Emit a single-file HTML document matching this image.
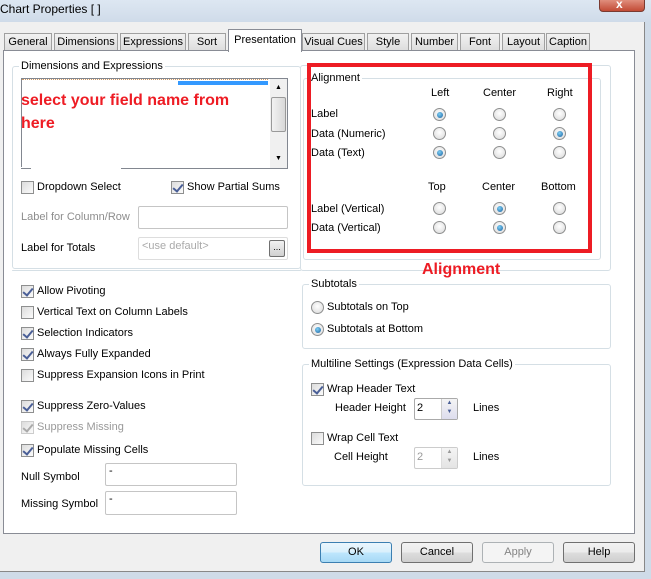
<!DOCTYPE html>
<html><head><style>
*{margin:0;padding:0;box-sizing:border-box}
body{width:651px;height:579px;overflow:hidden;background:#cfdbe8;font-family:"Liberation Sans",sans-serif;font-size:11px;color:#000;position:relative}
.a{position:absolute}
.t{position:absolute;white-space:nowrap;font-size:11px}
.tab{position:absolute;top:33px;height:18px;border:1px solid #a0a0a0;border-bottom:none;background:linear-gradient(#f2f2f2,#dcdcdc);font-size:11px;text-align:center;line-height:16px}
.grp{position:absolute;border:1px solid #d5dfe5;border-radius:3px}
.lg{position:absolute;background:#fff;padding:0 2px;font-size:11px;white-space:nowrap}
.cb{position:absolute;width:13px;height:13px;border:1px solid #8e8f8f;background:linear-gradient(135deg,#dcdcdc,#fbfbfb)}
.cb.c::after{content:"";position:absolute;left:3px;top:0px;width:4px;height:8px;border:solid #4a5f97;border-width:0 2px 2px 0;transform:rotate(40deg)}
.cb.g::after{border-color:#aaa}
.rd{position:absolute;width:13px;height:13px;border-radius:50%;border:1px solid #8e8f8f;background:radial-gradient(circle at 50% 40%,#fff,#d8d8d8)}
.rd.s::after{content:"";position:absolute;left:2.5px;top:2.5px;width:6px;height:6px;border-radius:50%;background:radial-gradient(circle at 40% 35%,#7ed0f5,#1a5f9e)}
.inp{position:absolute;background:#fff;border:1px solid #c5c5c5;border-radius:2px}
.btn{position:absolute;top:542px;width:72px;height:21px;border:1px solid #707070;border-radius:3px;background:linear-gradient(#f2f2f2 0,#ebebeb 50%,#dddddd 51%,#cfcfcf);text-align:center;line-height:19px;font-size:11px}
</style></head><body>
<!-- title -->
<div class="a" style="left:0;top:0;width:651px;height:22px;background:linear-gradient(#dde7f2,#cfdbe9)"></div>
<div class="t" style="left:0;top:2px;font-size:12px">Chart Properties [ ]</div>
<div class="a" style="left:599px;top:-4px;width:46px;height:16px;border:1px solid #7a3a30;border-radius:0 0 4px 4px;background:linear-gradient(#e8a090,#c24b35)"></div>
<div class="t" style="left:616px;top:-3px;color:#fff;font-weight:bold;font-size:12px">x</div>
<!-- dialog body -->
<div class="a" style="left:0;top:22px;width:645px;height:550px;background:#f0f0f0;border-right:1px solid #888;border-bottom:1px solid #888"></div>
<!-- tabs -->
<div class="tab" style="left:4px;width:48px">General</div>
<div class="tab" style="left:54px;width:64px">Dimensions</div>
<div class="tab" style="left:120px;width:66px">Expressions</div>
<div class="tab" style="left:188px;width:38px">Sort</div>
<div class="tab" style="left:302px;width:63px">Visual Cues</div>
<div class="tab" style="left:367px;width:42px">Style</div>
<div class="tab" style="left:411px;width:47px">Number</div>
<div class="tab" style="left:460px;width:40px">Font</div>
<div class="tab" style="left:502px;width:43px">Layout</div>
<div class="tab" style="left:546px;width:44px">Caption</div>
<!-- panel -->
<div class="a" style="left:3px;top:50px;width:632px;height:484px;background:#fff;border:1px solid #898c95"></div>
<div class="a" style="left:228px;top:29px;width:74px;height:23px;background:#fff;border:1px solid #898c95;border-bottom:none;text-align:center;line-height:20px">Presentation</div>
<!-- dims group -->
<div class="grp" style="left:12px;top:66px;width:289px;height:203px"></div>
<div class="lg" style="left:19px;top:60px">Dimensions and Expressions</div>
<div class="a" style="left:21px;top:78px;width:267px;height:91px;border:1px solid #828790;background:#fff"></div>
<div class="a" style="left:22px;top:79px;width:246px;height:2px;border-top:1px dotted #c96"></div>
<div class="a" style="left:178px;top:81px;width:90px;height:4px;background:#3399ff"></div>
<div class="t" style="left:21px;top:89px;color:#ee1c24;font-weight:bold;font-size:16px;line-height:23px">select your field name from<br>here</div>
<div class="a" style="left:270px;top:79px;width:17px;height:89px;background:#f0f0f0"></div>
<div class="a" style="left:271px;top:97px;width:15px;height:35px;border:1px solid #999;border-radius:2px;background:linear-gradient(90deg,#f2f2f2,#d8d8d8)"></div>
<div class="t" style="left:275px;top:84px;font-size:7px">▲</div><div class="t" style="left:275px;top:155px;font-size:7px">▼</div>
<div class="a" style="left:21px;top:167px;width:100px;height:4px;background:#fff"></div><div class="a" style="left:21px;top:168px;width:10px;height:1px;background:#828790"></div>
<div class="cb" style="left:21px;top:181px"></div><div class="t" style="left:37px;top:181px">Dropdown Select</div>
<div class="cb c" style="left:171px;top:181px"></div><div class="t" style="left:187px;top:181px">Show Partial Sums</div>
<div class="t" style="left:21px;top:211px;color:#8d8d8d">Label for Column/Row</div>
<div class="inp" style="left:138px;top:206px;width:150px;height:23px"></div>
<div class="t" style="left:21px;top:242px">Label for Totals</div>
<div class="inp" style="left:138px;top:237px;width:150px;height:23px;border-color:#ddd"></div>
<div class="t" style="left:142px;top:240px;color:#aaa">&lt;use default&gt;</div>
<div class="a" style="left:269px;top:240px;width:16px;height:17px;border:1px solid #707070;border-radius:2px;background:linear-gradient(#f2f2f2,#d0d0d0);font-size:9px;text-align:center;line-height:12px">...</div>
<!-- alignment -->
<div class="grp" style="left:300px;top:65px;width:311px;height:206px"></div>
<div class="grp" style="left:303px;top:78px;width:298px;height:182px"></div>
<div class="lg" style="left:309px;top:72px">Alignment</div>
<div class="a" style="left:307px;top:63px;width:285px;height:190px;border:4px solid #ed1c24"></div>
<div class="t" style="left:431px;top:87px">Left</div><div class="t" style="left:483px;top:87px">Center</div><div class="t" style="left:547px;top:87px">Right</div>
<div class="t" style="left:311px;top:108px">Label</div><div class="t" style="left:311px;top:128px">Data (Numeric)</div><div class="t" style="left:311px;top:147px">Data (Text)</div>
<div class="t" style="left:428px;top:181px">Top</div><div class="t" style="left:482px;top:181px">Center</div><div class="t" style="left:541px;top:181px">Bottom</div>
<div class="t" style="left:311px;top:203px">Label (Vertical)</div><div class="t" style="left:311px;top:222px">Data (Vertical)</div>
<div class="rd s" style="left:433px;top:108px"></div><div class="rd" style="left:493px;top:108px"></div><div class="rd" style="left:553px;top:108px"></div>
<div class="rd" style="left:433px;top:127px"></div><div class="rd" style="left:493px;top:127px"></div><div class="rd s" style="left:553px;top:127px"></div>
<div class="rd s" style="left:433px;top:146px"></div><div class="rd" style="left:493px;top:146px"></div><div class="rd" style="left:553px;top:146px"></div>
<div class="rd" style="left:433px;top:202px"></div><div class="rd s" style="left:493px;top:202px"></div><div class="rd" style="left:553px;top:202px"></div>
<div class="rd" style="left:433px;top:221px"></div><div class="rd s" style="left:493px;top:221px"></div><div class="rd" style="left:553px;top:221px"></div>
<div class="t" style="left:422px;top:261px;color:#ed1c24;font-weight:bold;font-size:16px">Alignment</div>
<!-- subtotals -->
<div class="grp" style="left:302px;top:284px;width:309px;height:65px"></div>
<div class="lg" style="left:309px;top:278px">Subtotals</div>
<div class="rd" style="left:311px;top:301px"></div><div class="t" style="left:327px;top:301px">Subtotals on Top</div>
<div class="rd s" style="left:311px;top:323px"></div><div class="t" style="left:327px;top:323px">Subtotals at Bottom</div>
<!-- multiline -->
<div class="grp" style="left:302px;top:364px;width:309px;height:122px"></div>
<div class="lg" style="left:309px;top:358px">Multiline Settings (Expression Data Cells)</div>
<div class="cb c" style="left:311px;top:383px"></div><div class="t" style="left:327px;top:383px">Wrap Header Text</div>
<div class="t" style="left:335px;top:402px">Header Height</div>
<div class="inp" style="left:414px;top:398px;width:44px;height:22px;border-color:#aaa"></div><div class="t" style="left:417px;top:402px">2</div>
<div class="a" style="left:441px;top:399px;width:16px;height:20px;background:linear-gradient(#f4f4f4,#dde);border-left:1px solid #ccc;font-size:6px;color:#4a5f97;text-align:center;line-height:9px">▲<br>▼</div>
<div class="t" style="left:473px;top:402px">Lines</div>
<div class="cb" style="left:311px;top:432px"></div><div class="t" style="left:327px;top:432px">Wrap Cell Text</div>
<div class="t" style="left:334px;top:451px">Cell Height</div>
<div class="inp" style="left:414px;top:447px;width:44px;height:22px;border-color:#ccc"></div><div class="t" style="left:417px;top:451px;color:#999">2</div>
<div class="a" style="left:441px;top:448px;width:16px;height:20px;background:linear-gradient(#f4f4f4,#e4e4e4);border-left:1px solid #ddd;font-size:6px;color:#999;text-align:center;line-height:9px">▲<br>▼</div>
<div class="t" style="left:473px;top:451px">Lines</div>
<!-- left checkboxes -->
<div class="grp" style="left:12px;top:270px;width:289px;height:0;border-width:1px 0 0 0"></div>
<div class="cb c" style="left:21px;top:285px"></div><div class="t" style="left:37px;top:285px">Allow Pivoting</div>
<div class="cb" style="left:21px;top:306px"></div><div class="t" style="left:37px;top:306px">Vertical Text on Column Labels</div>
<div class="cb c" style="left:21px;top:327px"></div><div class="t" style="left:37px;top:327px">Selection Indicators</div>
<div class="cb c" style="left:21px;top:348px"></div><div class="t" style="left:37px;top:348px">Always Fully Expanded</div>
<div class="cb" style="left:21px;top:369px"></div><div class="t" style="left:37px;top:369px">Suppress Expansion Icons in Print</div>
<div class="cb c" style="left:21px;top:400px"></div><div class="t" style="left:37px;top:400px">Suppress Zero-Values</div>
<div class="cb c g" style="left:21px;top:421px;border-color:#ccc"></div><div class="t" style="left:37px;top:421px;color:#999">Suppress Missing</div>
<div class="cb c" style="left:21px;top:444px"></div><div class="t" style="left:37px;top:444px">Populate Missing Cells</div>
<div class="t" style="left:21px;top:471px">Null Symbol</div>
<div class="inp" style="left:105px;top:463px;width:132px;height:23px"></div><div class="t" style="left:109px;top:465px">-</div>
<div class="t" style="left:21px;top:498px">Missing Symbol</div>
<div class="inp" style="left:105px;top:491px;width:132px;height:24px"></div><div class="t" style="left:109px;top:493px">-</div>
<!-- buttons -->
<div class="btn" style="left:320px;border-color:#3c7fb1;background:linear-gradient(#eaf6fd,#d9f0fc 50%,#bee6fd 51%,#a7d9f5)">OK</div>
<div class="btn" style="left:401px">Cancel</div>
<div class="btn" style="left:482px;border-color:#adb2b5;background:#f4f4f4;color:#838383">Apply</div>
<div class="btn" style="left:563px">Help</div>
</body></html>
